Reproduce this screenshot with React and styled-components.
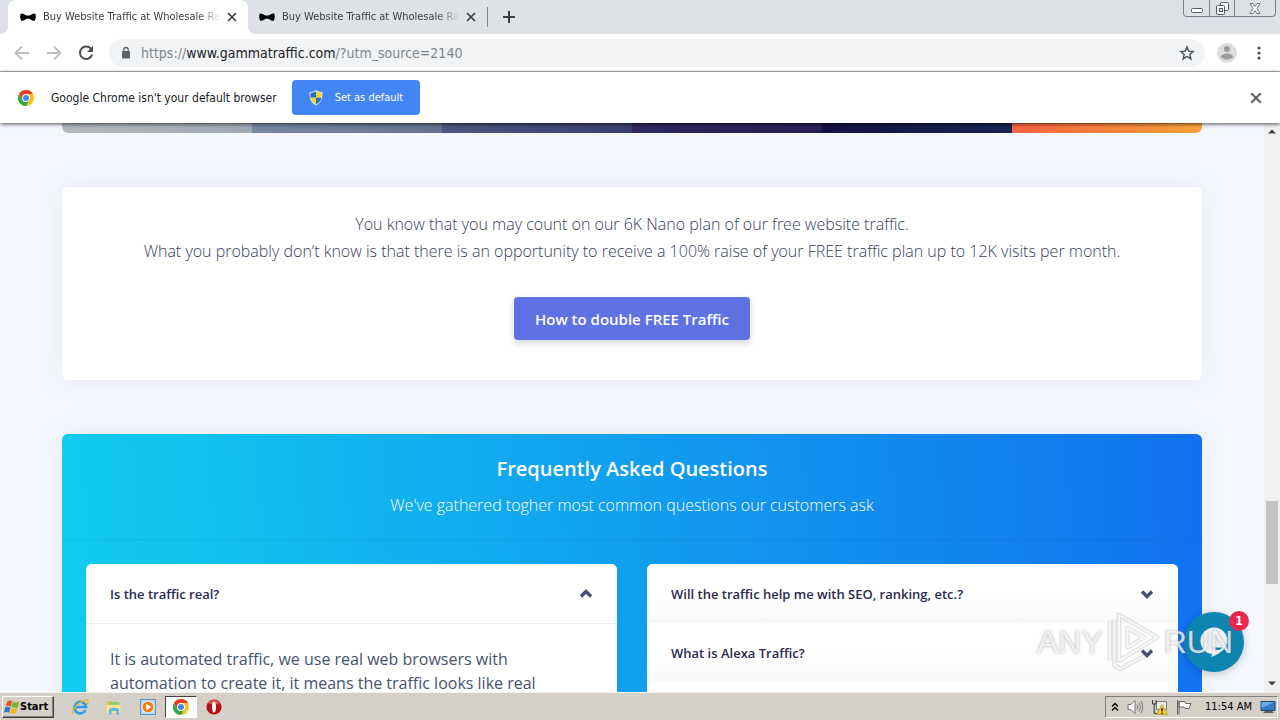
import React from "react";
import styled, { createGlobalStyle, css } from "styled-components";

const Global = createGlobalStyle`
  *, *::before, *::after { box-sizing: border-box; }
  body { margin: 0; background: #f4f6fe; }
  button { font: inherit; border: 0; padding: 0; background: none; color: inherit; cursor: pointer; }
  svg { display: block; flex: none; }
  p, h2 { margin: 0; }
`;

const uiFont = css`font-family: "DejaVu Sans Condensed", "DejaVu Sans", sans-serif;`;
const webFont = css`font-family: "Open Sans", sans-serif;`;

const Desktop = styled.div`
  position: relative;
  display: flex;
  flex-direction: column;
  height: 100vh;
  overflow: hidden;
  ${uiFont}
`;

/* Browser frame */
const TabStrip = styled.header`
  display: flex;
  align-items: stretch;
  height: 34px;
  flex: none;
  padding-left: 8px;
  background: #dee1e6;
`;
const Tab = styled.div`
  position: relative;
  display: flex;
  align-items: center;
  width: ${(p) => (p.$active ? "240px" : "239px")};
  padding: 0 11px 0 ${(p) => (p.$active ? "12px" : "11px")};
  border-radius: 8px 8px 0 0;
  background: ${(p) => (p.$active ? "#fff" : "transparent")};
  color: #3c4043;
  &::before, &::after {
    content: "";
    display: ${(p) => (p.$active ? "block" : "none")};
    position: absolute;
    bottom: 0;
    width: 8px;
    height: 8px;
  }
  &::before { left: -8px; background: radial-gradient(circle at 0 0, transparent 8px, #fff 8px); }
  &::after { right: -8px; background: radial-gradient(circle at 100% 0, transparent 8px, #fff 8px); }
`;
const TabTitle = styled.span`
  flex: 1;
  min-width: 0;
  margin: 0 7px;
  overflow: hidden;
  white-space: nowrap;
  font-size: 11px;
  line-height: 18px;
  mask-image: linear-gradient(90deg, #000 155px, transparent 178px);
`;
const NewTab = styled.button`
  align-self: center;
  display: grid;
  place-items: center;
  height: 20px;
  padding: 0 15px;
  border-left: 1px solid #80868b;
  color: #3c4043;
`;
const WindowControls = styled.div`
  display: flex;
  align-self: flex-start;
  height: 17px;
  margin: 0 4px 0 auto;
  border: 1px solid #7c8088;
  border-top: 0;
  border-radius: 0 0 4px 4px;
`;
const WindowButton = styled.button`
  display: grid;
  place-items: center;
  width: ${(p) => (p.$wide ? "41px" : "25px")};
  & + & { border-left: 1px solid #7c8088; }
`;
const Toolbar = styled.div`
  display: flex;
  align-items: center;
  flex: none;
  height: 38px;
  padding: 0 8px 0 14px;
  border-bottom: 1px solid #b4b4b4;
  background: #fff;
  color: #5f6368;
`;
const ToolButton = styled.button`
  display: grid;
  place-items: center;
  width: 16px;
  height: 28px;
  margin-right: 16px;
  color: ${(p) => (p.$dim ? "#bdbec0" : "#4b4f54")};
`;
const AddressBar = styled.div`
  display: flex;
  align-items: center;
  flex: 1;
  height: 28px;
  margin-left: -1px;
  padding: 0 10px 0 12px;
  border-radius: 14px;
  background: #f1f3f4;
`;
const Address = styled.span`
  flex: 1;
  margin-left: 10px;
  font-size: 14px;
  line-height: 20px;
  color: #80868b;
  white-space: nowrap;
  b { font-weight: 400; color: #202124; }
`;
const Profile = styled.button`
  margin: 0 16px 0 12px;
`;
const InfoBar = styled.div`
  position: relative;
  z-index: 1;
  display: flex;
  align-items: center;
  flex: none;
  height: 51px;
  padding: 0 18px;
  background: #fff;
  box-shadow: 0 1px 4px rgba(0, 0, 0, 0.7);
  font-size: 12px;
  color: #202124;
`;
const InfoText = styled.span`
  margin: 0 15px 0 17px;
  white-space: nowrap;
`;
const DefaultButton = styled.button`
  display: flex;
  align-items: center;
  gap: 12px;
  height: 35px;
  padding: 0 17px;
  border-radius: 4px;
  background: #4285f4;
  color: #fff;
  font-size: 11px;
`;
const CloseInfo = styled.button`
  margin-left: auto;
  color: #5f6368;
`;

/* Web page */
const Viewport = styled.div`
  display: flex;
  flex: 1;
  min-height: 0;
`;
const Page = styled.main`
  flex: 1;
  min-width: 0;
  padding: 0 62px;
  overflow: hidden;
  background: #f4f7fe;
  ${webFont}
  color: #465270;
`;
const PlanStrip = styled.div`
  display: grid;
  grid-template-columns: repeat(6, 1fr);
  height: 10px;
  margin-bottom: 54px;
  overflow: hidden;
  border-radius: 0 0 6px 6px;
`;
const PlanEdge = styled.div`
  background: linear-gradient(90deg, ${(p) => p.$from}, ${(p) => p.$to});
`;
const Offer = styled.section`
  display: flex;
  flex-direction: column;
  align-items: center;
  padding: 24px 24px 40px;
  margin-bottom: 54px;
  border-radius: 6px;
  background: #fff;
  box-shadow: 0 0 24px rgba(120, 120, 140, 0.1);
  text-align: center;
`;
const OfferText = styled.p`
  margin-bottom: 32px;
  font-size: 16px;
  font-weight: 300;
  line-height: 27px;
  color: #36405c;
`;
const OfferButton = styled.button`
  height: 43px;
  padding: 0 21px;
  border-radius: 4px;
  background: #5e72e4;
  box-shadow: 0 3px 6px rgba(50, 50, 93, 0.2);
  color: #fff;
  font-size: 15px;
  font-weight: 600;
`;
const Faq = styled.section`
  border-radius: 6px;
  background: linear-gradient(87deg, #11cdef, #1171ef);
  box-shadow: 0 0 24px rgba(120, 120, 140, 0.1);
`;
const FaqHeader = styled.header`
  padding: 20px 24px;
  border-bottom: 1px solid rgba(0, 0, 0, 0.05);
  color: #fff;
  text-align: center;
`;
const FaqTitle = styled.h2`
  font-size: 20px;
  font-weight: 600;
  line-height: 30px;
`;
const FaqLead = styled.p`
  padding-top: 8px;
  font-size: 16px;
  font-weight: 300;
  line-height: 27px;
`;
const FaqColumns = styled.div`
  display: grid;
  grid-template-columns: 1fr 1fr;
  align-items: start;
  gap: 30px;
  padding: 24px;
`;
const Accordion = styled.div`
  overflow: hidden;
  border-radius: 6px;
  background: #fff;
`;
const Question = styled.button`
  display: flex;
  align-items: center;
  justify-content: space-between;
  width: 100%;
  height: ${(p) => (p.$open ? "60px" : "59px")};
  padding: 0 24px;
  border-bottom: ${(p) => (p.$open ? "1px solid #eceef2" : "0")};
  background: ${(p) => (p.$open ? "#fff" : "linear-gradient(#fff 50%, #f9f9fb)")};
  color: #2b2a50;
  font-size: 13px;
  font-weight: 600;
  text-align: left;
  svg { color: #46506f; }
`;
const Answer = styled.p`
  padding: 23px 24px;
  font-size: 16px;
  line-height: 24px;
`;

const ScrollBar = styled.div`
  display: flex;
  flex-direction: column;
  align-items: center;
  flex: none;
  width: 16px;
  padding: 6px 0;
  background: #f1f1f1;
`;
const ScrollArrow = styled.button`
  width: 8px;
  height: 5px;
  flex: none;
`;
const ScrollGap = styled.div`
  flex: ${(p) => p.$share};
`;
const ScrollThumb = styled.div`
  flex: 83;
  width: 12px;
  background: #c1c1c1;
`;

/* Overlays */
const ChatButton = styled.button`
  position: absolute;
  right: 36px;
  bottom: 48px;
  display: grid;
  place-items: center;
  width: 60px;
  height: 60px;
  border-radius: 50%;
  background: #0e84b0;
  box-shadow: 0 2px 8px rgba(0, 0, 0, 0.2);
`;
const ChatCount = styled.span`
  position: absolute;
  top: -1px;
  right: -5px;
  width: 20px;
  height: 20px;
  border-radius: 50%;
  background: #e8294b;
  color: #fff;
  font-size: 12px;
  font-weight: 700;
  line-height: 20px;
  text-align: center;
`;
const Watermark = styled.div`
  position: absolute;
  right: 47px;
  bottom: 44px;
  display: flex;
  align-items: center;
  justify-content: space-between;
  width: 196px;
  height: 68px;
  pointer-events: none;
  font-family: "Liberation Sans Narrow", "Liberation Sans", sans-serif;
  font-size: 32px;
  line-height: 24px;
  color: rgba(255, 255, 255, 0.75);
  text-shadow: 0 0 3px rgba(100, 100, 110, 0.55);
`;

/* Taskbar */
const Taskbar = styled.footer`
  position: relative;
  display: flex;
  align-items: center;
  flex: none;
  height: 28px;
  padding: 2px;
  border-top: 1px solid #f4f2ee;
  background: #d4d0c8;
  color: #000;
`;
const StartButton = styled.button`
  display: flex;
  align-items: center;
  width: 52px;
  height: 22px;
  margin-right: 9px;
  padding-left: 1px;
  border: 1px solid;
  border-color: #fff #404040 #404040 #fff;
  box-shadow: inset -1px -1px #808080;
  font-size: 11px;
  font-weight: 700;
`;
const TaskItem = styled.button`
  display: grid;
  place-items: center;
  width: ${(p) => (p.$active ? "32px" : "34px")};
  height: 22px;
  border: ${(p) => (p.$active ? "1px solid" : "0")};
  border-color: #404040 #fff #fff #404040;
  background: ${(p) => (p.$active ? "#fff" : "none")};
`;
const Tray = styled.div`
  display: flex;
  align-items: center;
  gap: 8px;
  height: 22px;
  margin-left: auto;
  padding: 0 1px 0 5px;
  border: 1px solid;
  border-color: #808080 #fff #fff #808080;
  font-size: 11px;
  white-space: nowrap;
`;
const Clock = styled.time`
  margin: 0 0 0 5px;
`;

const BowTie = () => (
  <svg width="16" height="16" viewBox="0 0 16 16">
    <path d="M.8 4.500C2.500 4 5 5.800 6.500 6.600h3C11 5.800 13.500 4 15.200 4.500c.8 2 .8 5-.4 7.300-2 .4-3.800-1.300-5.300-2.100h-3C5 10.500 3.200 12.200 1.200 11.800 0 9.500 0 6.500.8 4.500z" fill="#000" />
  </svg>
);
const Cross = ({ size = 10 }) => (
  <svg width={size} height={size} viewBox="0 0 10 10" stroke="currentColor" strokeWidth="1.700">
    <path d="M1 1l8 8M9 1L1 9" />
  </svg>
);
const Arrow = ({ flip }) => (
  <svg width="16" height="16" viewBox="0 0 16 16" fill="none" stroke="currentColor" strokeWidth="1.800">
    <path d={flip ? "M1 8h13M8 1.500L14.500 8 8 14.500" : "M15 8H2M8 1.500L1.500 8 8 14.500"} />
  </svg>
);
const Reload = () => (
  <svg width="16" height="16" viewBox="0 0 16 16" fill="none">
    <path d="M13.200 4.200A6.200 6.200 0 1 0 14.100 9.500" stroke="currentColor" strokeWidth="2" />
    <path d="M15 1v6H9z" fill="currentColor" />
  </svg>
);
const Lock = () => (
  <svg width="10" height="14" viewBox="0 0 10 14">
    <rect x="1" y="5" width="8" height="7.500" rx="1" fill="#5f6368" />
    <path d="M2.800 5.500V3.700a2.200 2.200 0 0 1 4.400 0v1.800" stroke="#5f6368" strokeWidth="1.300" fill="none" />
  </svg>
);
const Star = () => (
  <svg width="16" height="16" viewBox="0 0 16 16" fill="none" stroke="#4b4f54" strokeWidth="1.400">
    <path d="M8 1.800l1.700 4.300 4.500.4-3.400 3 1.100 4.400L8 11.500l-3.900 2.400 1.100-4.400-3.400-3 4.500-.4z" />
  </svg>
);
const Avatar = () => (
  <svg width="20" height="20" viewBox="0 0 20 20">
    <circle cx="10" cy="10" r="10" fill="#dcdcdc" />
    <circle cx="10" cy="6" r="3" fill="#9b9b9b" />
    <ellipse cx="10" cy="13.500" rx="6" ry="3" fill="#9b9b9b" />
  </svg>
);
const ChromeLogo = () => (
  <svg width="16" height="16" viewBox="0 0 16 16">
    <circle cx="8" cy="8" r="8" fill="#fbc116" />
    <path d="M1.070 4A8 8 0 0 1 14.930 4H8a4 4 0 0 0-3.460 6z" fill="#e33b2e" />
    <path d="M1.070 4A8 8 0 0 0 8 16l3.460-6a4 4 0 0 1-6.920 0z" fill="#2da94f" />
    <circle cx="8" cy="8" r="4" fill="#fff" />
    <circle cx="8" cy="8" r="3" fill="#4688f1" />
  </svg>
);
const Shield = () => (
  <svg width="14" height="16" viewBox="0 0 14 16">
    <path d="M7 0c2 1.500 4 2 6.500 2 .4 6-1 10.500-6.500 13.500C1.500 12.500.1 8 .5 2 3 2 5 1.500 7 0z" fill="#dfeaf2" />
    <path d="M7 1.600V7.700H1.600C1.400 6 1.400 4.500 1.500 3 3.500 3 5.400 2.500 7 1.600z" fill="#1d6fc4" />
    <path d="M7 1.600V7.700h5.400c.2-1.700.2-3.200.1-4.700-2 0-3.900-.5-5.500-1.400z" fill="#f7d629" />
    <path d="M7 14.300V7.700H1.600c.5 3 2 5 5.400 6.600z" fill="#f7d629" />
    <path d="M7 14.300V7.700h5.400c-.5 3-2 5-5.400 6.600z" fill="#1d6fc4" />
  </svg>
);
const Chevron = ({ up }) => (
  <svg width="14" height="10" viewBox="0 0 14 10" fill="none" stroke="currentColor" strokeWidth="3.400">
    <path d={up ? "M2 7.500l5-5 5 5" : "M2 2.500l5 5 5-5"} />
  </svg>
);
const Triangle = ({ up }) => (
  <svg width="8" height="5" viewBox="0 0 8 5">
    <path d={up ? "M0 4.500L4 .5l4 4z" : "M0 .5l4 4 4-4z"} fill="#404040" />
  </svg>
);
const WindowsFlag = () => (
  <svg width="16" height="16" viewBox="0 0 16 16">
    <path d="M3.500 2C5 1 6.800 1.300 8.300 2.300L6.800 7.500C5.200 6.600 3.500 6.400 1.600 7.200z" fill="#e4562a" />
    <path d="M9 2.700c1.800.9 3.900 1 6.300 0L13.600 8.200c-2 .8-4.100.8-6-.2z" fill="#74b52c" />
    <path d="M1.300 8.200c1.900-.8 3.600-.5 5.200.3L5 13.700c-1.600-.9-3.300-1-5-.2z" fill="#3577c8" />
    <path d="M7.300 8.900c1.900.9 3.900 1 6 .2l-1.500 5.100c-2.100.9-4.100.8-6-.2z" fill="#f3b51c" />
  </svg>
);
const Explorer = () => (
  <svg width="18" height="18" viewBox="0 0 18 18" fill="none">
    <path d="M14.500 12A5.800 5.800 0 1 1 15 9H4.500" stroke="#2f9be0" strokeWidth="2.600" />
    <path d="M2 16C-1 13 8 3 15.500 1.800c2.500-.3 1.500 3 .4 4.500" stroke="#e9b52b" strokeWidth="1.300" />
  </svg>
);
const Folder = () => (
  <svg width="18" height="18" viewBox="0 0 18 18">
    <path d="M2 3h5l1 2h7v10H2z" fill="#e7c14f" />
    <path d="M4 4h10v4H4z" fill="#8fd06a" />
    <path d="M1.500 7h14l-.5 8H2z" fill="#fae591" />
    <path d="M4 16.500v-5.500q5-2.500 10 0v5.500h-2.500V13h-5v3.500z" fill="#5eb5e6" />
  </svg>
);
const Player = () => (
  <svg width="18" height="18" viewBox="0 0 18 18">
    <rect x="1.500" y="1.500" width="15" height="15" fill="#b9dcf3" stroke="#5893c4" />
    <circle cx="9" cy="9" r="5.800" fill="#f07f13" stroke="#fff" strokeWidth=".7" />
    <path d="M7.200 5.700L12.500 9l-5.300 3.300z" fill="#fff" />
  </svg>
);
const Opera = () => (
  <svg width="16" height="16" viewBox="0 0 16 16">
    <circle cx="8" cy="8" r="7.600" fill="#b70f13" />
    <path d="M2 4a7.600 7.600 0 0 1 12 0q-6 3-12 0z" fill="#e05550" />
    <ellipse cx="8" cy="8" rx="2" ry="5.500" fill="#fff" />
  </svg>
);
const ShowHidden = () => (
  <svg width="8" height="10" viewBox="0 0 8 10" fill="none" stroke="#000" strokeWidth="1.400">
    <path d="M1 4.500l3-3 3 3M1 8.500l3-3 3 3" />
  </svg>
);
const Speaker = () => (
  <svg width="16" height="16" viewBox="0 0 16 16" fill="none" stroke="#777">
    <path d="M1 5.500h3l4-4v13l-4-4H1z" fill="#fff" />
    <path d="M10 5.500q1.500 2.500 0 5M12 3.500q3 4.500 0 9M14 2q3.500 6 0 12" />
  </svg>
);
const Network = () => (
  <svg width="17" height="16" viewBox="0 0 17 16">
    <path d="M5.500 2.500h10v8h-10z" fill="#ececec" stroke="#777" />
    <path d="M1.500 1v4h3.500V1M3.200 5v9.500H10" fill="none" stroke="#333" />
    <path d="M11 5.500l5.500 10h-11z" fill="#f8cf22" stroke="#aa8510" strokeWidth=".6" />
    <path d="M11 9v3.500M11 13.500V15" stroke="#000" strokeWidth="1.300" />
  </svg>
);
const Flag = () => (
  <svg width="16" height="16" viewBox="0 0 16 16" fill="#fff" stroke="#666">
    <path d="M3 2.500h6l1 2h5l-2 5H9l-1-1.500H3z" />
    <path d="M1.500 1v14.500M3 2v13.500" />
  </svg>
);
const ShowDesktop = () => (
  <svg width="16" height="16" viewBox="0 0 16 16">
    <path d="M1 2.500h14v9H1z" fill="#3477c5" stroke="#174679" />
    <path d="M1.500 3h13L1.500 9z" fill="#70aae4" />
    <path d="M5 12h7l2 2H3z" fill="#566" />
  </svg>
);
const ChatIcon = () => (
  <svg width="30" height="32" viewBox="0 0 30 32">
    <path d="M15 1.500a13.500 13.500 0 0 1 13.500 13.500c0 6-5 11.500-16 16l.5-3A13 13 0 0 1 1.500 15 13.500 13.500 0 0 1 15 1.500z" fill="#f0f5f8" />
    <path d="M14 21.500h9q-1 2.500-4.500 2.500t-4.500-2.500z" fill="#0e84b0" />
  </svg>
);
const PlayMark = () => (
  <svg width="54" height="66" viewBox="0 0 58 66" fill="none" strokeLinejoin="round">
    <path d="M14 4l41 24-41 25zM4 10v43M9 9v49l6 4 26-14M23 18v21l18-11z" stroke="#77777f" strokeOpacity=".2" strokeWidth="5" />
    <path d="M14 4l41 24-41 25zM4 10v43M9 9v49l6 4 26-14M23 18v21l18-11z" stroke="#fff" strokeOpacity=".75" strokeWidth="2" />
  </svg>
);

const plans = [
  ["#b3b7c0", "#a3aab6"],
  ["#7889a3", "#66738f"],
  ["#4d5680", "#3c3e6e"],
  ["#322a62", "#281d55"],
  ["#171247", "#172451"],
  ["#fb6340", "#fba33a"],
];
const otherQuestions = [
  "Will the traffic help me with SEO, ranking, etc.?",
  "What is Alexa Traffic?",
];

function BrowserTab({ active }) {
  return (
    <Tab $active={active}>
      <BowTie />
      <TabTitle>Buy Website Traffic at Wholesale Ra</TabTitle>
      <button aria-label="Close tab"><Cross /></button>
    </Tab>
  );
}

export default function App() {
  return (
    <Desktop>
      <Global />
      <TabStrip>
        <BrowserTab active />
        <BrowserTab />
        <NewTab aria-label="New tab">
          <svg width="12" height="12" viewBox="0 0 12 12" stroke="currentColor" strokeWidth="2"><path d="M6 0v12M0 6h12" /></svg>
        </NewTab>
        <WindowControls>
          <WindowButton aria-label="Minimize">
            <svg width="12" height="14" viewBox="0 0 12 14"><rect x=".5" y="7.500" width="11" height="4" rx="1" fill="#fff" stroke="#555b66" /></svg>
          </WindowButton>
          <WindowButton aria-label="Restore">
            <svg width="13" height="14" viewBox="0 0 13 14" fill="#f4f5f7" stroke="#555b66"><rect x="4.500" y="1.500" width="8" height="8" rx="1" /><rect x=".5" y="4.500" width="8" height="9" rx="1" /><rect x="3.500" y="7.500" width="3" height="3" /></svg>
          </WindowButton>
          <WindowButton $wide aria-label="Close">
            <svg width="12" height="11" viewBox="0 0 12 11"><path d="M1 .5h3l2 3 2-3h3L8 5.500l3 5H8l-2-3-2 3H1l3-5z" fill="#fff" stroke="#555b66" strokeWidth=".8" /></svg>
          </WindowButton>
        </WindowControls>
      </TabStrip>
      <Toolbar>
        <ToolButton $dim aria-label="Back"><Arrow /></ToolButton>
        <ToolButton $dim aria-label="Forward"><Arrow flip /></ToolButton>
        <ToolButton aria-label="Reload"><Reload /></ToolButton>
        <AddressBar>
          <Lock />
          <Address>https://<b>www.gammatraffic.com</b>/?utm_source=2140</Address>
          <button aria-label="Bookmark this page"><Star /></button>
        </AddressBar>
        <Profile aria-label="Profile"><Avatar /></Profile>
        <button aria-label="Menu">
          <svg width="19" height="16" viewBox="0 0 19 16" fill="#4b4f54"><circle cx="6" cy="3" r="1.600" /><circle cx="6" cy="8" r="1.600" /><circle cx="6" cy="13" r="1.600" /></svg>
        </button>
      </Toolbar>
      <InfoBar>
        <ChromeLogo />
        <InfoText>Google Chrome isn't your default browser</InfoText>
        <DefaultButton><Shield />Set as default</DefaultButton>
        <CloseInfo aria-label="Dismiss"><Cross size={12} /></CloseInfo>
      </InfoBar>

      <Viewport>
        <Page>
          <PlanStrip>
            {plans.map(([from, to]) => <PlanEdge key={from} $from={from} $to={to} />)}
          </PlanStrip>
          <Offer>
            <OfferText>
              You know that you may count on our 6K Nano plan of our free website traffic.<br />
              What you probably don’t know is that there is an opportunity to receive a 100% raise of your FREE traffic plan up to 12K visits per month.
            </OfferText>
            <OfferButton>How to double FREE Traffic</OfferButton>
          </Offer>
          <Faq>
            <FaqHeader>
              <FaqTitle>Frequently Asked Questions</FaqTitle>
              <FaqLead>We've gathered togher most common questions our customers ask</FaqLead>
            </FaqHeader>
            <FaqColumns>
              <Accordion>
                <Question $open aria-expanded="true">Is the traffic real?<Chevron up /></Question>
                <Answer>
                  It is automated traffic, we use real web browsers with<br />
                  automation to create it, it means the traffic looks like real
                </Answer>
              </Accordion>
              <Accordion>
                {otherQuestions.map((q) => (
                  <Question key={q} aria-expanded="false">{q}<Chevron /></Question>
                ))}
                <Question aria-label="More questions" />
              </Accordion>
            </FaqColumns>
          </Faq>
        </Page>
        <ScrollBar>
          <ScrollArrow aria-label="Scroll up"><Triangle up /></ScrollArrow>
          <ScrollGap $share={366} />
          <ScrollThumb />
          <ScrollGap $share={97} />
          <ScrollArrow aria-label="Scroll down"><Triangle /></ScrollArrow>
        </ScrollBar>
      </Viewport>

      <Taskbar>
        <StartButton><WindowsFlag />Start</StartButton>
        <TaskItem aria-label="Internet Explorer"><Explorer /></TaskItem>
        <TaskItem aria-label="File Explorer"><Folder /></TaskItem>
        <TaskItem aria-label="Media Player"><Player /></TaskItem>
        <TaskItem $active aria-label="Chrome"><ChromeLogo /></TaskItem>
        <TaskItem aria-label="Opera"><Opera /></TaskItem>
        <Tray>
          <ShowHidden />
          <Speaker />
          <Network />
          <Flag />
          <Clock>11:54 AM</Clock>
          <ShowDesktop />
        </Tray>
      </Taskbar>

      <ChatButton aria-label="Open chat">
        <ChatIcon />
        <ChatCount>1</ChatCount>
      </ChatButton>
      <Watermark>
        <span>ANY</span>
        <PlayMark />
        <span>RUN</span>
      </Watermark>
    </Desktop>
  );
}
